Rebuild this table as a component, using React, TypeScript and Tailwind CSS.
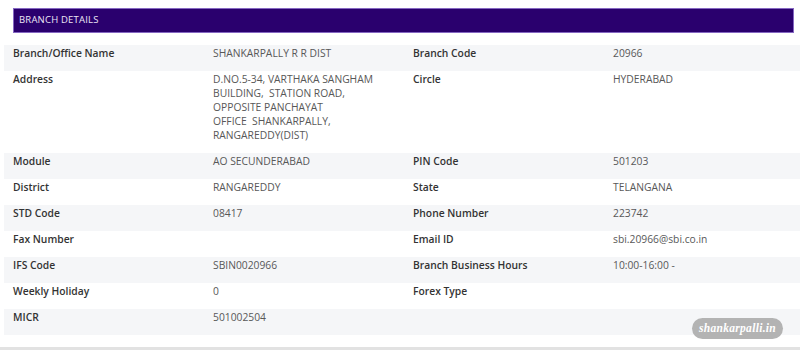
import React from 'react';

interface Row {
  label: string;
  value: React.ReactNode;
  label2: string;
  value2: string;
}

const ROWS: Row[] = [
  { label: 'Branch/Office Name', value: 'SHANKARPALLY R R DIST', label2: 'Branch Code', value2: '20966' },
  {
    label: 'Address',
    value: (
      <>
        D.NO.5-34, VARTHAKA SANGHAM
        <br />
        BUILDING,{'\u00a0'} STATION ROAD,
        <br />
        OPPOSITE PANCHAYAT
        <br />
        OFFICE{'\u00a0'} SHANKARPALLY,
        <br />
        RANGAREDDY(DIST)
      </>
    ),
    label2: 'Circle',
    value2: 'HYDERABAD',
  },
  { label: 'Module', value: 'AO SECUNDERABAD', label2: 'PIN Code', value2: '501203' },
  { label: 'District', value: 'RANGAREDDY', label2: 'State', value2: 'TELANGANA' },
  { label: 'STD Code', value: '08417', label2: 'Phone Number', value2: '223742' },
  { label: 'Fax Number', value: '', label2: 'Email ID', value2: 'sbi.20966@sbi.co.in' },
  { label: 'IFS Code', value: 'SBIN0020966', label2: 'Branch Business Hours', value2: '10:00-16:00 -' },
  { label: 'Weekly Holiday', value: '0', label2: 'Forex Type', value2: '' },
  { label: 'MICR', value: '501002504', label2: '', value2: '' },
];

export default function App() {
  return (
    <div className="relative w-[800px] h-[350px] bg-white overflow-hidden font-['Open_Sans',sans-serif]">
      {/* Header */}
      <div className="mt-[8px] ml-[13px] w-[781px] h-[25px] bg-[#2a006e] border border-[#8567c2] flex items-center pl-[5px]">
        <span className="text-[9.5px] text-[#ece6f6] tracking-[0.2px]">BRANCH DETAILS</span>
      </div>

      {/* Table */}
      <div className="mt-[12px] ml-[4px]">
        {ROWS.map((row, i) => (
          <div
            key={row.label}
            className={`grid grid-cols-[200px_200px_200px_1fr] text-[10.3px] leading-[14px] ${
              i % 2 === 0 ? 'bg-[#f5f6f8]' : 'bg-white'
            }`}
          >
            <div className="pl-[9px] pt-px pb-[11px] text-[#333] font-semibold">{row.label}</div>
            <div className="pl-[9px] pt-px pb-[11px] text-[#585858]">{row.value}</div>
            <div className="pl-[9px] pt-px pb-[11px] text-[#333] font-semibold">{row.label2}</div>
            <div className="pl-[9px] pt-px pb-[11px] text-[#585858]">{row.value2}</div>
          </div>
        ))}
      </div>

      {/* Bottom band */}
      <div className="mt-[12px] h-[4px] bg-[#e2e2e2]" />

      {/* Watermark */}
      <div className="absolute left-[692px] top-[318px] w-[91px] h-[21px] rounded-full bg-[#b3b3b3] flex items-center justify-center">
        <span className="font-['Liberation_Serif',serif] italic font-bold text-[11.5px] text-white tracking-[0.3px]">
          shankarpalli.in
        </span>
      </div>
    </div>
  );
}
